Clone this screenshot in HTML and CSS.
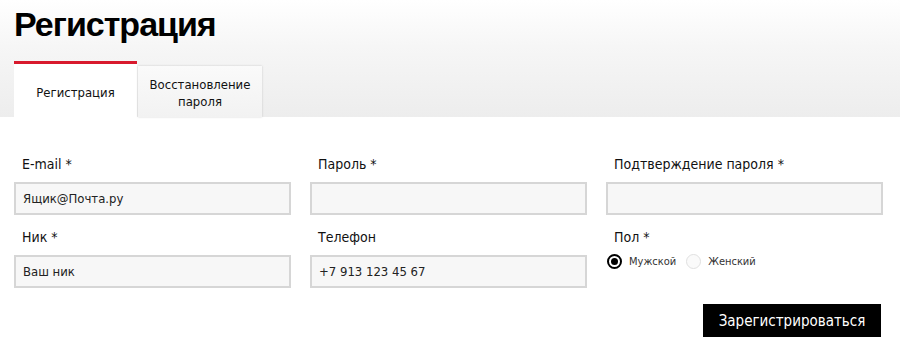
FILE: index.html
```html
<!DOCTYPE html>
<html lang="ru">
<head>
<meta charset="utf-8">
<link rel="stylesheet" href="styles.css">
</head>
<body>
<header class="top">
  <h1 class="title">Регистрация</h1>
  <nav class="tabs">
    <div class="tab tab-active">Регистрация</div>
    <div class="tab">Восстановление<br>пароля</div>
  </nav>
</header>
<form class="form">
  <div class="grid">
    <div class="field">
      <label class="label">E-mail *</label>
      <div class="input">Ящик@Почта.ру</div>
    </div>
    <div class="field">
      <label class="label">Пароль *</label>
      <div class="input"></div>
    </div>
    <div class="field">
      <label class="label">Подтверждение пароля *</label>
      <div class="input"></div>
    </div>
    <div class="field">
      <label class="label">Ник *</label>
      <div class="input">Ваш ник</div>
    </div>
    <div class="field">
      <label class="label">Телефон</label>
      <div class="input phone">+7 913 123 45 67</div>
    </div>
    <div class="field">
      <label class="label">Пол *</label>
      <div class="radios">
        <span class="radio radio-on"></span><span class="radio-text">Мужской</span>
        <span class="radio"></span><span class="radio-text">Женский</span>
      </div>
    </div>
  </div>
  <div class="actions">
    <button type="button" class="btn">Зарегистрироваться</button>
  </div>
</form>
</body>
</html>
```
FILE: styles.css
```css
html, body { margin: 0; padding: 0; background: #fff; }
body { font-family: "DejaVu Sans Condensed", "DejaVu Sans", sans-serif; color: #111; }
.top {
  height: 117px;
  background: linear-gradient(to bottom, #ffffff 0%, #f6f6f6 40%, #ededed 100%);
  padding-left: 14px;
  display: flex;
  flex-direction: column;
}
.title {
  margin: 0;
  padding-top: 4px;
  height: 57px;
  font-family: "Liberation Sans", sans-serif;
  font-weight: bold;
  font-size: 34px;
  line-height: 40px;
  letter-spacing: -1px;
  color: #000;
}
.tabs { display: flex; align-items: flex-end; flex: 1; }
.tab {
  width: 124px;
  height: 51px;
  box-sizing: border-box;
  background: linear-gradient(to bottom, #fafafa, #f2f2f2);
  box-shadow: 0 0 2px rgba(0,0,0,0.18);
  display: flex;
  align-items: center;
  justify-content: center;
  text-align: center;
  font-size: 13px;
  line-height: 17px;
  color: #111;
  padding-top: 2px;
}
.tab-active {
  width: 123px;
  height: 56px;
  background: #fff;
  border-top: 3px solid #d8192d;
  box-shadow: none;
  margin-right: 1px;
  padding-top: 3px;
}
.form { padding: 0 19px 0 14px; }
.grid {
  display: grid;
  grid-template-columns: repeat(3, 277px);
  column-gap: 19px;
  row-gap: 13px;
  padding-top: 38px;
}
.label {
  display: block;
  font-size: 14px;
  line-height: 18px;
  height: 20px;
  padding-left: 8px;
  margin-bottom: 7px;
}
.input {
  height: 33px;
  box-sizing: border-box;
  border: 2px solid #d6d6d6;
  background: #f7f7f7;
  font-size: 13px;
  line-height: 29px;
  padding-left: 7px;
  color: #222;
}
.radios { display: flex; align-items: center; margin-top: -1px; margin-left: 1px; font-size: 11px; color: #333; }
.radio {
  width: 15px; height: 15px; box-sizing: border-box;
  border: 1px solid #e0e0e0; border-radius: 50%;
  background: #fafafa;
  margin-right: 7px;
  position: relative;
}
.radio-on { border: 2px solid #000; background: #fff; }
.radio-on::after {
  content: ""; position: absolute; left: 2px; top: 2px;
  width: 7px; height: 7px; border-radius: 50%; background: #000;
}
.radio-text { margin-right: 10px; }
.actions { display: flex; justify-content: flex-end; padding-top: 16px; }
.btn {
  height: 33px;
  width: 178px;
  border: 0;
  background: #000;
  color: #fff;
  font-family: "DejaVu Sans Condensed", "DejaVu Sans", sans-serif;
  font-size: 15px;
  padding: 0;
}
```
